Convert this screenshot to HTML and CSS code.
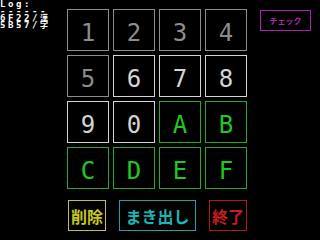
FILE: index.html
```html
<!DOCTYPE html>
<html lang="ja">
<head>
<meta charset="utf-8">
<link rel="stylesheet" href="styles.css">
</head>
<body>
<div class="screen">
  <div class="top">
    <div class="log">
      <div class="log-title">Log:</div>
      <div class="log-sep">------</div>
      <div class="log-line">6F22/<span class="kj">漢</span></div>
      <div class="log-line">5B57/<span class="kj">字</span></div>
    </div>
    <div class="pad">
      <div class="key dim">1</div>
      <div class="key dim">2</div>
      <div class="key dim">3</div>
      <div class="key dim">4</div>
      <div class="key dim">5</div>
      <div class="key lit">6</div>
      <div class="key lit">7</div>
      <div class="key lit">8</div>
      <div class="key lit">9</div>
      <div class="key lit">0</div>
      <div class="key hex">A</div>
      <div class="key hex">B</div>
      <div class="key hex">C</div>
      <div class="key hex">D</div>
      <div class="key hex">E</div>
      <div class="key hex">F</div>
    </div>
    <div class="check">チェック</div>
  </div>
  <div class="actions">
    <div class="btn del">削除</div>
    <div class="btn out">まき出し</div>
    <div class="btn end">終了</div>
  </div>
</div>
</body>
</html>
```
FILE: styles.css
```css
html, body {
  margin: 0;
  padding: 0;
  background: #000;
}
.screen {
  width: 320px;
  height: 240px;
  overflow: hidden;
  background: #000;
}
.top {
  display: flex;
  align-items: flex-start;
}
.log {
  width: 67px;
  color: #fff;
  font-family: "DejaVu Sans Mono", monospace;
  font-size: 9px;
  font-weight: bold;
  letter-spacing: 2.6px;
  white-space: nowrap;
}
.kj {
  font-family: "Noto Sans CJK JP", sans-serif;
  font-size: 8px;
  letter-spacing: 0;
}
.log-title { line-height: 9px; height: 9px; }
.log-sep { line-height: 5px; height: 5px; }
.log-line { line-height: 7px; height: 7px; }
.pad {
  margin-top: 9px;
  display: grid;
  grid-template-columns: repeat(4, 42px);
  grid-auto-rows: 42px;
  gap: 4px;
}
.key {
  box-sizing: border-box;
  border: 1px solid;
  display: flex;
  align-items: center;
  justify-content: center;
  padding-top: 5px;
  font-family: "DejaVu Sans Mono", monospace;
  font-size: 24px;
  line-height: 1;
}
.dim { color: #8c8c8c; border-color: #8c8c8c; }
.lit { color: #d4d4d4; border-color: #d4d4d4; }
.hex { color: #20c820; border-color: #28a828; }
.check {
  box-sizing: border-box;
  margin-top: 10px;
  margin-left: 13px;
  width: 51px;
  height: 21px;
  border: 1px solid #b020b0;
  color: #a828a8;
  display: flex;
  align-items: center;
  justify-content: center;
  font-family: "Noto Sans CJK JP", sans-serif;
  font-size: 8px;
  font-weight: bold;
}
.actions {
  margin-top: 11px;
  padding-left: 68px;
  display: flex;
  gap: 13px;
}
.btn {
  box-sizing: border-box;
  height: 31px;
  width: 38px;
  border: 1px solid;
  display: flex;
  align-items: center;
  justify-content: center;
  font-family: "Noto Sans CJK JP", sans-serif;
  font-size: 16px;
  font-weight: bold;
  line-height: 1;
}
.btn.out { width: 77px; }
.del { color: #c8c81e; border-color: #c0c040; }
.out { color: #1eb4b4; border-color: #20a0a8; }
.end { color: #c81e1e; border-color: #b01a1a; }
```
